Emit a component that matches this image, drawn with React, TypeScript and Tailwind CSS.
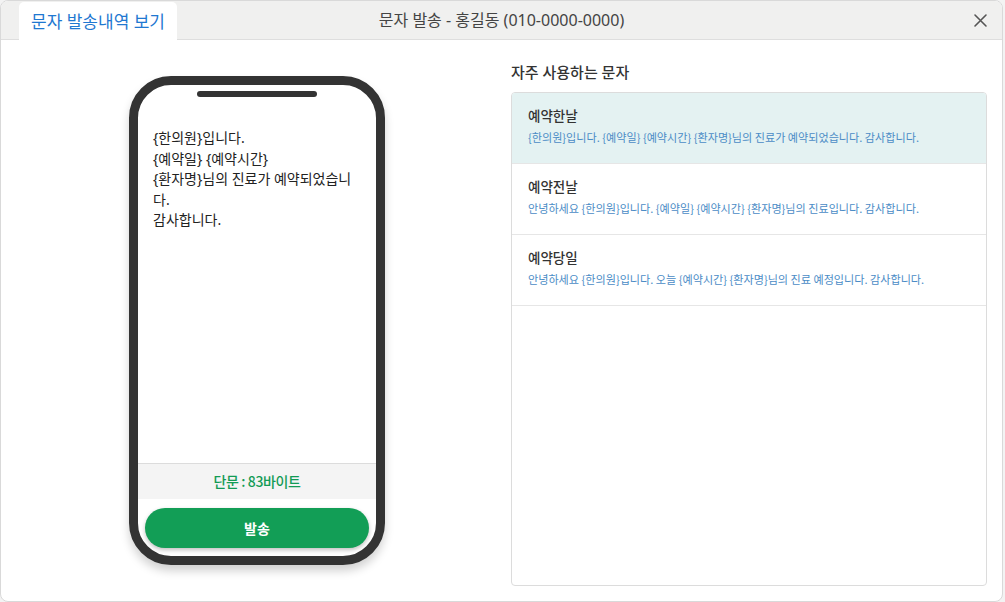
import React from "react";

const items = [
  {
    title: "예약한날",
    desc: "{한의원}입니다. {예약일} {예약시간} {환자명}님의 진료가 예약되었습니다. 감사합니다.",
    active: true,
  },
  {
    title: "예약전날",
    desc: "안녕하세요 {한의원}입니다. {예약일} {예약시간} {환자명}님의 진료입니다. 감사합니다.",
    active: false,
  },
  {
    title: "예약당일",
    desc: "안녕하세요 {한의원}입니다. 오늘 {예약시간} {환자명}님의 진료 예정입니다. 감사합니다.",
    active: false,
  },
];

export default function App() {
  return (
    <div
      className="w-[1005px] h-[602px] bg-[#f3f3f3] overflow-hidden"
      style={{ fontFamily: '"Noto Sans", "Noto Sans CJK KR", sans-serif' }}
    >
      <div className="w-[1003px] h-[602px] bg-white border border-[#d9d9d9] rounded-[8px] overflow-hidden flex flex-col">
        {/* Header */}
        <div className="relative h-[39px] shrink-0 bg-[#f0f0ef] border-b border-[#dedede] flex items-center">
          <div className="absolute left-[18px] top-[1px] w-[158px] h-[38px] bg-white rounded-t-[5px] flex items-center justify-center">
            <span className="text-[17px] text-[#1f78d1] leading-none">문자 발송내역 보기</span>
          </div>
          <div className="flex-1 text-center text-[16px] text-[#444] leading-none">
            문자 발송 - 홍길동 (010-0000-0000)
          </div>
          <button className="absolute right-[14px] top-[11px] w-[16px] h-[16px] flex items-center justify-center">
            <svg width="15" height="15" viewBox="0 0 15 15" fill="none" stroke="#555" strokeWidth="1.6" strokeLinecap="round">
              <path d="M2 2 L13 13 M13 2 L2 13" />
            </svg>
          </button>
        </div>

        {/* Body */}
        <div className="flex gap-[16px] pl-[18px] pr-[15px] pt-[23px]">
          {/* Left column */}
          <div className="w-[476px] flex justify-center pt-[13px]">
            <div className="w-[256px] h-[489px] border-[9px] border-[#333] rounded-[42px] bg-white flex flex-col overflow-hidden shadow-[0_6px_10px_rgba(0,0,0,0.18)]">
              <div className="flex justify-center pt-[6px]">
                <div className="w-[120px] h-[6px] rounded-full bg-[#333]" />
              </div>
              <div className="flex-1 px-[15px] pt-[31px] text-[14px] leading-[20.5px] text-[#222]">
                {"{한의원}입니다."}
                <br />
                {"{예약일} {예약시간}"}
                <br />
                {"{환자명}님의 진료가 예약되었습니다."}
                <br />
                감사합니다.
              </div>
              <div
                className="h-[36px] shrink-0 bg-[#f4f4f4] border-t border-[#dcdcdc] flex items-center justify-center text-[14px] font-medium text-[#129b55] tracking-[-0.4px]"
                style={{ fontFamily: '"Noto Sans CJK KR", sans-serif' }}
              >
                단문 : 83바이트
              </div>
              <div className="px-[7px] pt-[9px] pb-[8px] shrink-0">
                <button className="w-full h-[40px] rounded-full bg-[#129e56] text-white text-[14px] font-bold shadow-[0_2px_4px_rgba(0,0,0,0.25)]">
                  발송
                </button>
              </div>
            </div>
          </div>

          {/* Right column */}
          <div className="w-[476px] flex flex-col">
            <div className="text-[15px] font-medium text-[#333] leading-[16px] h-[29px] pt-[1px]">자주 사용하는 문자</div>
            <div className="h-[494px] border border-[#dcdcdc] rounded-[4px] overflow-hidden">
              {items.map((it) => (
                <div
                  key={it.title}
                  className={
                    "h-[71px] border-b border-[#e6e6e6] px-[16px] pt-[14px] " +
                    (it.active ? "bg-[#e4f2f2]" : "bg-white")
                  }
                >
                  <div className="text-[13.5px] font-medium text-[#333] leading-[18px]">{it.title}</div>
                  <div
                    className="text-[11.1px] text-[#4b8cc6] leading-[16px] mt-[4px]"
                    style={{ fontFamily: '"Noto Sans CJK KR", sans-serif' }}
                  >
                    {it.desc}
                  </div>
                </div>
              ))}
            </div>
          </div>
        </div>
      </div>
    </div>
  );
}
